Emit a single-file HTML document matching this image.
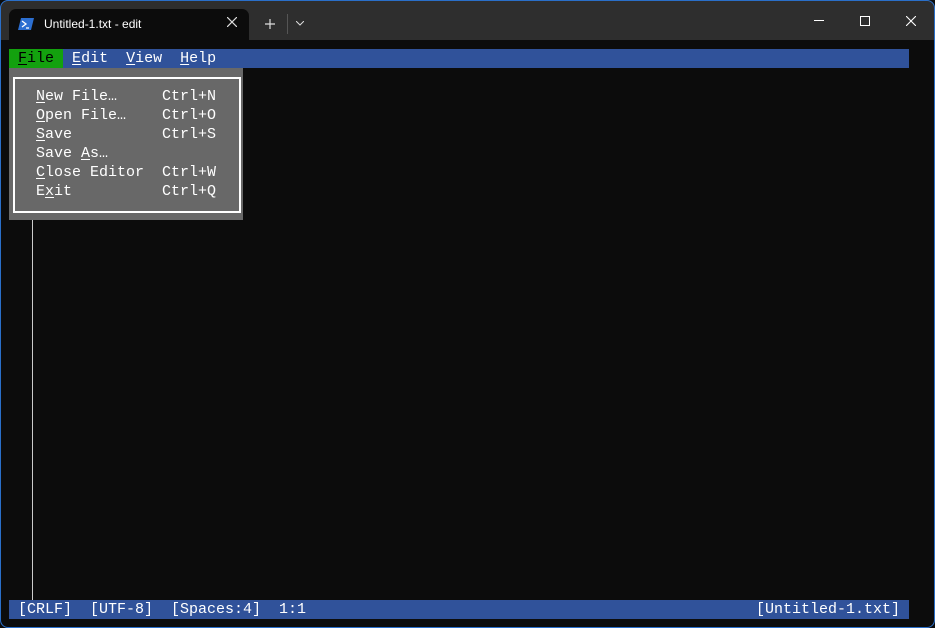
<!DOCTYPE html>
<html><head><style>
*{margin:0;padding:0;box-sizing:border-box}
body{width:935px;height:628px;background:#0c0c0c;overflow:hidden;position:relative;font-family:"Liberation Mono",monospace}
.win{position:absolute;left:0;top:0;width:935px;height:628px;border-radius:8px;overflow:hidden;background:#0c0c0c}
.brd{position:absolute;left:0;top:0;width:935px;height:628px;border:1px solid #2a6fc9;border-radius:8px;z-index:5;pointer-events:none}
.title{position:absolute;left:0;top:0;width:935px;height:40px;background:#2e2e2e}
.tab{position:absolute;left:9px;top:9px;width:240px;height:32px;background:#0c0c0c;border-radius:7px 7px 0 0}
.tab .t{position:absolute;left:35px;top:8px;font:12px "Liberation Sans",sans-serif;color:#fff}
.m{position:absolute;font-size:15px;line-height:19px;white-space:pre;color:#fff}
.u{text-decoration:underline;text-underline-offset:2px}
</style></head><body><div class="win">
<div class="title">
 <div class="tab">
  <svg style="position:absolute;left:9px;top:8px" width="16" height="14"><path d="M3 1H16L13 13H0Z" fill="#2c6fd1"/><path d="M4 4L8 7L4 10M8 11H11" stroke="#fff" stroke-width="1.3" fill="none"/></svg>
  <div class="t">Untitled-1.txt - edit</div>
  <svg style="position:absolute;left:218px;top:8px" width="10" height="10"><path d="M0 0L10 10M10 0L0 10" stroke="#ddd" stroke-width="1.2"/></svg>
 </div>
 <svg style="position:absolute;left:265px;top:19px" width="10" height="10"><path d="M5 0V10M0 5H10" stroke="#ddd" stroke-width="1.2"/></svg>
 <div style="position:absolute;left:287px;top:14px;width:1px;height:20px;background:#555"></div>
 <svg style="position:absolute;left:296px;top:21px" width="8" height="5"><path d="M0 0L4 4L8 0" stroke="#ddd" fill="none"/></svg>
 <div style="position:absolute;left:814px;top:20px;width:10px;height:1px;background:#fff"></div>
 <div style="position:absolute;left:860px;top:16px;width:10px;height:10px;border:1px solid #fff"></div>
 <svg style="position:absolute;left:906px;top:16px" width="10" height="10"><path d="M0 0L10 10M10 0L0 10" stroke="#fff" stroke-width="1.1"/></svg>
</div>
<div style="position:absolute;left:9px;top:49px;width:900px;height:19px;background:#30529a"></div>
<div style="position:absolute;left:9px;top:49px;width:54px;height:19px;background:#13a10e"></div>
<div class="m" style="left:18px;top:49px"><span class="u" style="color:#000">F</span><span style="color:#000">ile</span>  <span class="u">E</span>dit  <span class="u">V</span>iew  <span class="u">H</span>elp</div>
<div style="position:absolute;left:9px;top:68px;width:234px;height:152px;background:#686868"></div>
<div style="position:absolute;left:13px;top:77px;width:228px;height:136px;border:2px solid #fff"></div>
<div class="m" style="left:36px;top:87px;color:#fff"><span class="u">N</span>ew File…     Ctrl+N
<span class="u">O</span>pen File…    Ctrl+O
<span class="u">S</span>ave          Ctrl+S
Save <span class="u">A</span>s…
<span class="u">C</span>lose Editor  Ctrl+W
E<span class="u">x</span>it          Ctrl+Q</div>
<div style="position:absolute;left:32px;top:220px;width:1px;height:380px;background:#ccc"></div>
<div style="position:absolute;left:9px;top:600px;width:900px;height:19px;background:#30529a"></div>
<div class="m" style="left:18px;top:600px">[CRLF]  [UTF-8]  [Spaces:4]  1:1</div>
<div class="m" style="left:756px;top:600px">[Untitled-1.txt]</div>
</div><div class="brd"></div></body></html>
